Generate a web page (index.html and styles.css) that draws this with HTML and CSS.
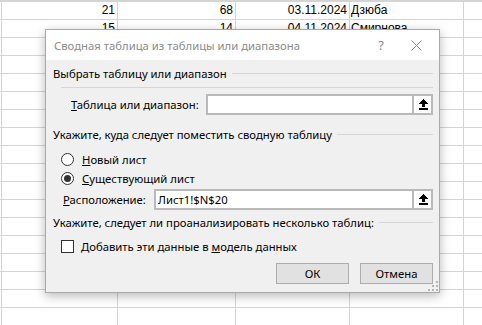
FILE: index.html
```html
<!DOCTYPE html>
<html lang="ru">
<head>
<meta charset="utf-8">
<title>Сводная таблица</title>
<link rel="stylesheet" href="styles.css">
</head>
<body>
<div class="sheet">
  <div class="col c1"><div class="cell num">21</div><div class="cell num">15</div></div>
  <div class="col c2"><div class="cell num">68</div><div class="cell num">14</div></div>
  <div class="col c3"><div class="cell num">03.11.2024</div><div class="cell num">04.11.2024</div></div>
  <div class="col c4"><div class="cell">Дзюба</div><div class="cell">Смирнова</div></div>
  <div class="col c5"></div>
</div>

<div class="dialog">
  <div class="titlebar">
    <span class="title">Сводная таблица из таблицы или диапазона</span>
    <span class="help">?</span>
    <span class="close"><svg width="11" height="11" viewBox="0 0 11 11"><path d="M0.5 0.5L10.5 10.5M10.5 0.5L0.5 10.5" stroke="#8a8a8a" stroke-width="1" fill="none"/></svg></span>
  </div>
  <div class="body">
    <div class="heading"><span>Выбрать таблицу или диапазон</span><span class="rule"></span></div>
    <div class="groupline"></div>
    <div class="field f1">
      <label class="lbl"><u>Т</u>аблица или диапазон:</label>
      <div class="input"><span class="value"></span><span class="pick"><svg width="9" height="11" viewBox="0 0 9 11" shape-rendering="crispEdges"><path d="M4.5 0L9 4.5H6V8H3V4.5H0Z" fill="#000"/><rect x="0" y="9" width="9" height="2" fill="#000"/></svg></span></div>
    </div>
    <div class="heading h2"><span>Укажите, куда следует поместить сводную таблицу</span><span class="rule"></span></div>
    <div class="radio r1"><span class="circle"></span><span><u>Н</u>овый лист</span></div>
    <div class="radio checked"><span class="circle"></span><span><u>С</u>уществующий лист</span></div>
    <div class="field f2">
      <label class="lbl"><u>Р</u>асположение:</label>
      <div class="input"><span class="value">Лист1!$N$20</span><span class="pick"><svg width="9" height="11" viewBox="0 0 9 11" shape-rendering="crispEdges"><path d="M4.5 0L9 4.5H6V8H3V4.5H0Z" fill="#000"/><rect x="0" y="9" width="9" height="2" fill="#000"/></svg></span></div>
    </div>
    <div class="heading h3"><span>Укажите, следует ли проанализировать несколько таблиц:</span><span class="rule"></span></div>
    <div class="check"><span class="box"></span><span>Добавить эти данные в <u>м</u>одель данных</span></div>
    <div class="buttons"><button class="btn">ОК</button><button class="btn">Отмена</button></div>
  </div>
  <svg class="grip" width="10" height="10" viewBox="0 0 10 10" shape-rendering="crispEdges">
    <rect x="8" y="0" width="2" height="2" fill="#b5b5b5"/>
    <rect x="4" y="4" width="2" height="2" fill="#b5b5b5"/>
    <rect x="8" y="4" width="2" height="2" fill="#b5b5b5"/>
    <rect x="0" y="8" width="2" height="2" fill="#b5b5b5"/>
    <rect x="4" y="8" width="2" height="2" fill="#b5b5b5"/>
    <rect x="8" y="8" width="2" height="2" fill="#b5b5b5"/>
  </svg>
</div>
</body>
</html>
```

FILE: styles.css
```css
html, body {
  margin: 0;
  padding: 0;
  background: #fff;
  width: 482px;
  height: 325px;
  overflow: hidden;
}

.sheet {
  display: flex;
  height: 325px;
  background-image: repeating-linear-gradient(to bottom, #d4d4d4 0, #d4d4d4 1px, transparent 1px, transparent 18px);
  background-position: 0 1px;
  font-family: "Liberation Sans", Arial, sans-serif;
  font-size: 12px;
  color: #000;
}

.col {
  box-sizing: border-box;
  border-left: 1px solid #d4d4d4;
  padding-top: 1px;
}
.c1 { margin-left: 1px; width: 116px; }
.c2 { width: 118px; }
.c3 { width: 114px; }
.c4 { width: 114px; }
.c5 { flex: 1; }

.cell {
  height: 18px;
  line-height: 18px;
  padding: 0 2px 0 1px;
  white-space: nowrap;
}
.num { text-align: right; }

.dialog {
  position: absolute;
  left: 45px;
  top: 29px;
  width: 395px;
  height: 264px;
  box-sizing: border-box;
  border: 1px solid #a9a9a9;
  background: #f0f0f0;
  box-shadow: 0 3px 10px rgba(0, 0, 0, 0.28);
  font-family: "Noto Sans", "Open Sans", sans-serif;
  font-size: 11.3px;
  color: #000;
}

.titlebar {
  height: 30px;
  background: #fff;
  display: flex;
  align-items: center;
  padding-left: 8px;
}
.title {
  flex: 1;
  color: #8c8c8c;
  white-space: nowrap;
  font-size: 11.3px;
}
.help {
  width: 20px;
  text-align: center;
  color: #8c8c8c;
  font-size: 13px;
  margin-right: 20px;
}
.close {
  width: 11px;
  height: 11px;
  margin-right: 17px;
  display: flex;
}

.body {
  padding: 6px 6px 0 7px;
  display: flex;
  flex-direction: column;
}

.heading {
  display: flex;
  align-items: center;
  gap: 5px;
  height: 16px;
  line-height: 16px;
  white-space: nowrap;
}
.rule {
  flex: 1;
  border-top: 1px solid #d6d6d6;
  margin-top: -1px;
}
.h2 { margin-top: 12px; }
.h3 { margin-top: 5px; }

.groupline {
  margin-top: 5px;
  margin-left: 8px;
  border-top: 1px solid #d6d6d6;
}

.field {
  display: flex;
  align-items: center;
  height: 21px;
}
.f1 { margin-top: 6px; }
.f1 .lbl { margin-left: 18px; width: 135px; }
.f2 { margin-top: 1px; }
.f2 .lbl { margin-left: 10px; width: 91px; }
.lbl { white-space: nowrap; }

.input {
  flex: 1;
  height: 21px;
  box-sizing: border-box;
  border: 2px solid #b9b9b9;
  background: #fff;
  display: flex;
}
.value {
  flex: 1;
  padding-left: 2px;
  line-height: 17px;
}
.pick {
  width: 16px;
  border-left: 2px solid #b9b9b9;
  display: flex;
  align-items: center;
  justify-content: center;
  padding-left: 1px;
}

.radio, .check {
  display: flex;
  align-items: center;
  height: 19px;
  margin-left: 8px;
  white-space: nowrap;
}
.r1 { margin-top: 7px; }
.circle {
  width: 13px;
  height: 13px;
  box-sizing: border-box;
  border: 1px solid #333;
  border-radius: 50%;
  background: #fff;
  margin-right: 8px;
  display: flex;
  align-items: center;
  justify-content: center;
}
.checked .circle::after {
  content: "";
  width: 7px;
  height: 7px;
  border-radius: 50%;
  background: #333;
}

.check {
  margin-top: 6px;
  height: 18px;
}
.box {
  width: 13px;
  height: 13px;
  box-sizing: border-box;
  border: 1px solid #333;
  background: #fff;
  margin-right: 7px;
}

.buttons {
  margin-top: 8px;
  display: flex;
  justify-content: flex-end;
  gap: 11px;
}
.btn {
  width: 73px;
  height: 21px;
  box-sizing: border-box;
  border: 1px solid #adadad;
  background: #e1e1e1;
  font-family: "Noto Sans", "Open Sans", sans-serif;
  font-size: 11.3px;
  color: #000;
  padding: 0;
}

.grip {
  position: absolute;
  right: 1px;
  bottom: 1px;
}
```
